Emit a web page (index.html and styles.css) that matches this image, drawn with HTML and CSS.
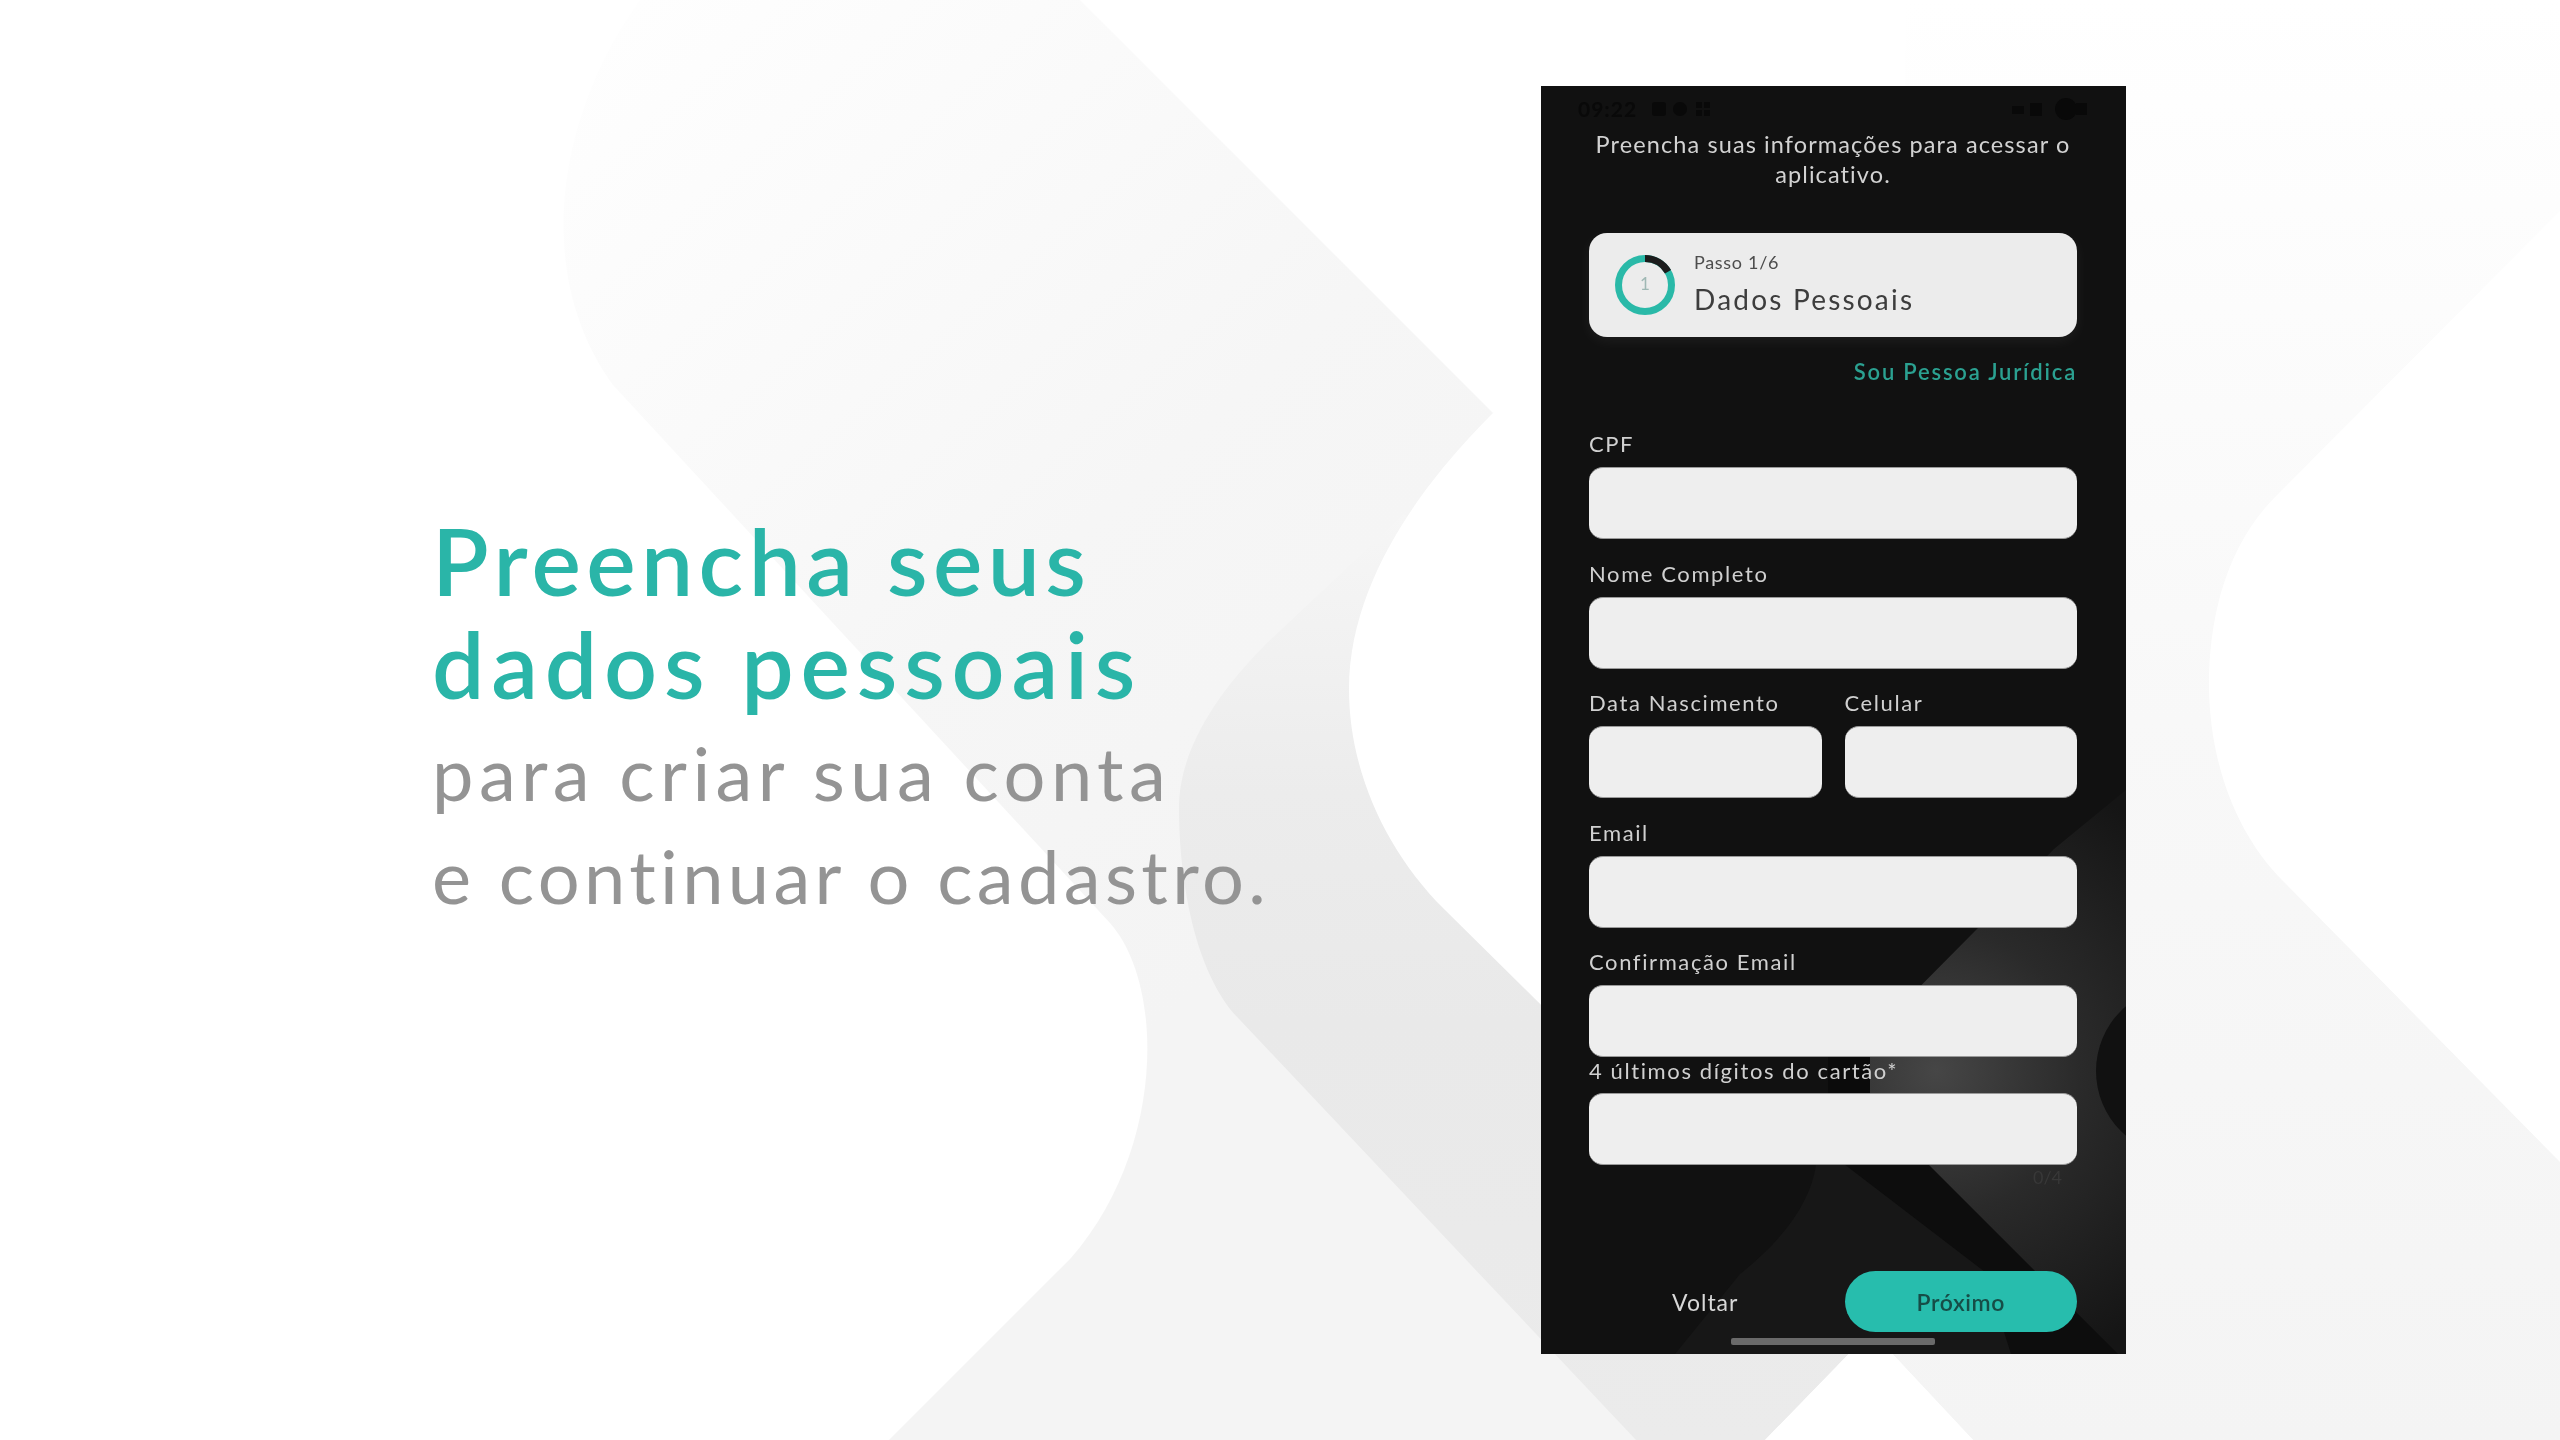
FILE: index.html
```html
<!DOCTYPE html>
<html lang="pt-BR">
<head>
<meta charset="utf-8">
<title>Preencha seus dados pessoais</title>
<link rel="stylesheet" href="styles.css">
</head>
<body>
<svg class="backdrop" viewBox="0 0 2560 1440" aria-hidden="true">
  <defs>
    <linearGradient id="bandFill" gradientUnits="userSpaceOnUse" x1="500" y1="0" x2="1300" y2="900">
      <stop offset="0" stop-color="#ffffff"/>
      <stop offset="0.3" stop-color="#fbfbfb"/>
      <stop offset="0.65" stop-color="#f6f6f6"/>
      <stop offset="1" stop-color="#f4f4f4"/>
    </linearGradient>
    <linearGradient id="sideFill" x1="0" y1="0" x2="0" y2="1">
      <stop offset="0" stop-color="#ffffff"/>
      <stop offset="0.5" stop-color="#f8f8f8"/>
      <stop offset="1" stop-color="#f4f4f4"/>
    </linearGradient>
    <linearGradient id="innerFill" x1="0" y1="0" x2="0" y2="1">
      <stop offset="0" stop-color="#f6f6f6"/>
      <stop offset="0.3" stop-color="#ececec"/>
      <stop offset="0.55" stop-color="#e9e9e9"/>
      <stop offset="1" stop-color="#ebebeb"/>
    </linearGradient>
  </defs>
  <path fill="url(#bandFill)" d="M640 0 C560 110 530 270 613 385 L1110 923 C1165 985 1165 1150 1071 1258 L889 1440 L1765 1440 L1871 1331 L1700 300 L1493 413 L1080 0 Z"/>
  <path fill="url(#sideFill)" d="M1906 0 L2560 0 L2560 1440 L1973 1440 L1871 1331 L1900 300 Z"/>
  <path fill="url(#innerFill)" d="M1404 514 L1267 643 C1205 705 1179 760 1179 808 C1179 880 1195 975 1240 1020 L1636 1440 L1765 1440 L1871 1331 L1700 700 Z"/>
  <path fill="#ffffff" d="M1493 413 C1440 466 1349 570 1349 689 C1349 770 1385 850 1444 909 L1871 1331 L1765 1440 L1973 1440 L1871 1331 L1900 600 L1906 0 Z"/>
  <path fill="#ffffff" d="M2560 211 L2276 496 C2225 547 2209 620 2209 684 C2209 760 2235 833 2283 881 L2560 1162 Z"/>
</svg>

<main class="page">
  <section class="hero">
    <h1 class="hero-title"><span class="title-one">Preencha seus</span><br><span class="title-two">dados pessoais</span></h1>
    <p class="hero-sub"><span class="sub-one">para criar sua conta</span><br><span class="sub-two">e continuar o cadastro.</span></p>
  </section>

  <section class="phone">
    <svg class="phone-art" viewBox="0 0 585 1268" aria-hidden="true">
      <defs>
        <radialGradient id="glow" gradientUnits="userSpaceOnUse" cx="395" cy="985" r="320">
          <stop offset="0" stop-color="#464646"/>
          <stop offset="0.45" stop-color="#2a2a2a"/>
          <stop offset="1" stop-color="#151515"/>
        </radialGradient>
      </defs>
      <path fill="#171717" d="M275 1078 C270 1120 235 1160 199 1188 L134 1268 L585 1268 L585 1078 Z"/>
      <path fill="url(#glow)" d="M436 843 L513 763 L585 704 L585 1268 L575 1268 L387 1080 L329 1080 L329 951 Z"/>
      <path fill="#0b0b0b" d="M287 971 L329 971 L329 1007 L287 1007 Z"/>
      <path fill="#0d0d0d" d="M303 1078 L387 1078 L577 1268 L470 1268 L444 1186 Z"/>
      <circle fill="#111111" cx="640" cy="985" r="85"/>
    </svg>

    <div class="phone-body">
      <div class="status">
        <div class="status-group">
          <span class="status-time">09:22</span>
          <svg class="status-icons" viewBox="0 0 64 20"><rect x="2" y="3" width="14" height="14" rx="3"/><circle cx="30" cy="10" r="7"/><rect x="46" y="3" width="6" height="6"/><rect x="54" y="3" width="6" height="6"/><rect x="46" y="11" width="6" height="6"/><rect x="54" y="11" width="6" height="6"/></svg>
        </div>
        <svg class="status-right" viewBox="0 0 78 22"><rect x="2" y="8" width="12" height="8"/><rect x="20" y="5" width="12" height="13"/><circle cx="56" cy="11" r="11"/><rect x="66" y="5" width="11" height="12"/></svg>
      </div>

      <p class="intro">Preencha suas informações para acessar o<br>aplicativo.</p>

      <div class="step-card">
        <svg class="ring" viewBox="0 0 60 60">
          <circle class="ring-track" cx="30" cy="30" r="26.5"/>
          <path class="ring-done" d="M30 3.5 A26.5 26.5 0 0 1 53 16.8"/>
          <text class="ring-num" x="30" y="35" text-anchor="middle">1</text>
        </svg>
        <div class="step-text">
          <span class="step-count">Passo 1/6</span>
          <span class="step-name">Dados Pessoais</span>
        </div>
      </div>

      <a class="link">Sou Pessoa Jurídica</a>

      <div class="fields">
        <div class="field"><label class="label">CPF</label><div class="input"></div></div>
        <div class="field"><label class="label">Nome Completo</label><div class="input"></div></div>
        <div class="field-pair">
          <div class="field"><label class="label">Data Nascimento</label><div class="input"></div></div>
          <div class="field"><label class="label">Celular</label><div class="input"></div></div>
        </div>
        <div class="field"><label class="label">Email</label><div class="input"></div></div>
        <div class="field"><label class="label">Confirmação Email</label><div class="input"></div></div>
        <div class="field"><label class="label label-tight">4 últimos dígitos do cartão*</label><div class="input"></div></div>
      </div>

      <div class="counter">0/4</div>

      <div class="actions">
        <span class="back">Voltar</span>
        <span class="next">Próximo</span>
      </div>
      <div class="home-bar"></div>
    </div>
  </section>
</main>
</body>
</html>
```
FILE: styles.css
```css
* { box-sizing: border-box; }

html, body {
  margin: 0;
  height: 1440px;
  overflow: hidden;
  background: #ffffff;
  font-family: "Lato", "Open Sans", sans-serif;
}

.backdrop {
  position: absolute;
  left: 0;
  top: 0;
  width: 2560px;
  height: 1440px;
}

.page {
  position: relative;
  display: flex;
  align-items: flex-start;
  height: 1440px;
  padding-left: 432px;
}

/* Left copy */
.hero {
  width: 1109px;
  padding-top: 509px;
}

.hero-title {
  margin: 0;
  font-size: 93px;
  line-height: 103px;
  font-weight: 600;
  color: #2ab5a8;
}

.title-one { letter-spacing: 5.4px; }
.title-two { letter-spacing: 6.8px; }

.hero-sub {
  margin: 6px 0 0;
  font-size: 74px;
  line-height: 103px;
  font-weight: 400;
  color: #949494;
}

.sub-one { letter-spacing: 5.4px; }
.sub-two { letter-spacing: 4.35px; }

/* Phone */
.phone {
  position: relative;
  width: 585px;
  height: 1268px;
  margin-top: 86px;
  background: #111111;
  overflow: hidden;
}

.phone-art {
  position: absolute;
  left: 0;
  top: 0;
  width: 585px;
  height: 1268px;
}

.phone-body {
  position: relative;
  display: flex;
  flex-direction: column;
  height: 100%;
  padding: 0 49px 0 48px;
  filter: blur(0.5px);
}

.status {
  display: flex;
  align-items: center;
  justify-content: space-between;
  height: 43px;
  margin: 0 -11px;
  padding-top: 2px;
  color: #090909;
}

.status-group {
  display: flex;
  align-items: center;
  gap: 12px;
}

.status-time {
  font-size: 21px;
  font-weight: 700;
  letter-spacing: 1px;
  line-height: 22px;
}

.status-icons { width: 66px; height: 20px; fill: #090909; }
.status-right { width: 78px; height: 22px; fill: #090909; }

.intro {
  margin: 0 -20px;
  height: 62px;
  font-size: 23.5px;
  line-height: 30px;
  letter-spacing: 1.1px;
  text-align: center;
  color: #d2d2d2;
}

.step-card {
  display: flex;
  align-items: center;
  gap: 19px;
  height: 104px;
  margin-top: 42px;
  padding-left: 26px;
  background: #ececec;
  border-radius: 18px;
  box-shadow: 0 4px 14px rgba(255, 255, 255, 0.06);
}

.ring { width: 60px; height: 60px; flex: none; }
.ring-track { fill: none; stroke: #2ab9a8; stroke-width: 7; }
.ring-done { fill: none; stroke: #1c1c1c; stroke-width: 7; }
.ring-num { font-size: 17px; fill: #9fb8b4; font-family: "Lato", sans-serif; }

.step-text {
  display: flex;
  flex-direction: column;
  gap: 9px;
  padding-bottom: 3px;
}

.step-count {
  font-size: 18px;
  line-height: 22px;
  letter-spacing: 0.7px;
  color: #4d4d4d;
}

.step-name {
  font-size: 28px;
  line-height: 34px;
  letter-spacing: 2.2px;
  color: #3d3d3d;
}

.link {
  align-self: flex-end;
  margin-top: 21px;
  font-size: 22px;
  line-height: 28px;
  letter-spacing: 1.8px;
  font-weight: 600;
  color: #2ba191;
}

.fields {
  display: flex;
  flex-direction: column;
  margin-top: 23.5px;
}

.field {
  display: flex;
  flex-direction: column;
  flex: 1;
  min-width: 0;
}

.field-pair {
  display: flex;
  gap: 23px;
}

.label {
  display: block;
  height: 57.5px;
  padding-top: 20.5px;
  font-size: 22px;
  line-height: 28px;
  letter-spacing: 1.6px;
  color: #d0d0d0;
}

.label-tight {
  height: 36px;
  padding-top: 0;
}

.input {
  height: 72px;
  background: #eeeeee;
  border-radius: 14px;
  border-top: 1px solid #9a9a9a;
  border-bottom: 1px solid #9a9a9a;
}

.counter {
  align-self: flex-end;
  margin: 2px 15px 0 0;
  font-size: 18px;
  line-height: 20px;
  color: #383838;
}

.actions {
  display: grid;
  grid-template-columns: 1fr 1fr;
  column-gap: 23px;
  align-items: center;
  margin-top: 84px;
  font-size: 23px;
  letter-spacing: 1px;
}

.back {
  text-align: center;
  color: #d8d8d8;
}

.next {
  height: 61px;
  line-height: 62px;
  border-radius: 31px;
  background: #27bdad;
  color: #164d47;
  font-weight: 600;
  letter-spacing: 0.6px;
  text-align: center;
}

.home-bar {
  align-self: center;
  width: 204px;
  height: 7px;
  margin-top: 6px;
  border-radius: 2px;
  background: #6a6a6a;
}
```
